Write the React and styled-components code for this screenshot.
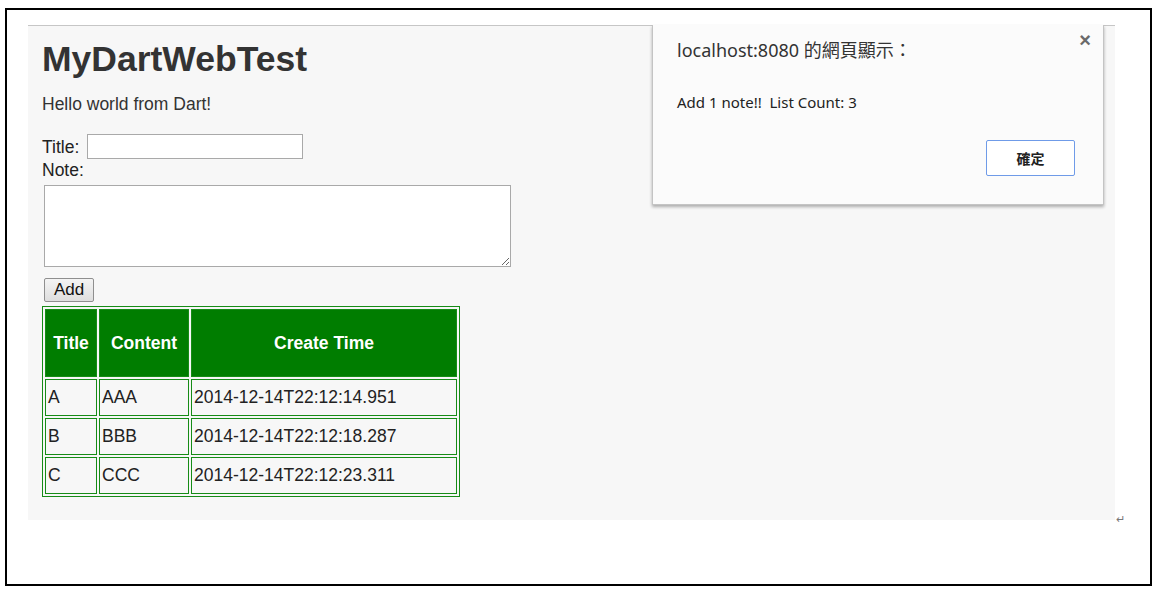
import React from "react";
import styled, { createGlobalStyle } from "styled-components";

const GlobalStyle = createGlobalStyle`
  html, body {
    margin: 0;
    padding: 0;
    background: #ffffff;
  }
  body {
    font-family: "Liberation Sans", Arial, sans-serif;
  }
`;

const notes = [
  { title: "A", content: "AAA", time: "2014-12-14T22:12:14.951" },
  { title: "B", content: "BBB", time: "2014-12-14T22:12:18.287" },
  { title: "C", content: "CCC", time: "2014-12-14T22:12:23.311" },
];

const App = () => {
  return (
    <>
      <GlobalStyle />
      <StFrame>
        <StShot>
          <StPage>
            <StHeading>MyDartWebTest</StHeading>
            <StHello>Hello world from Dart!</StHello>
            <StFieldRow>
              <StLabel>Title:</StLabel>
              <StInput type="text" />
            </StFieldRow>
            <StLabel>Note:</StLabel>
            <StTextArea />
            <StAddButton>Add</StAddButton>
            <StTable>
              <thead>
                <tr>
                  <StHeadCell $w={52}>Title</StHeadCell>
                  <StHeadCell $w={90}>Content</StHeadCell>
                  <StHeadCell $w={266}>Create Time</StHeadCell>
                </tr>
              </thead>
              <tbody>
                {notes.map((n) => (
                  <tr key={n.title}>
                    <StCell>{n.title}</StCell>
                    <StCell>{n.content}</StCell>
                    <StCell>{n.time}</StCell>
                  </tr>
                ))}
              </tbody>
            </StTable>
          </StPage>

          <StDialog>
            <StClose>×</StClose>
            <StDialogTitle>localhost:8080 的網頁顯示：</StDialogTitle>
            <StDialogText>Add 1 note!!&nbsp; List Count: 3</StDialogText>
            <StDialogFooter>
              <StOkButton>確定</StOkButton>
            </StDialogFooter>
          </StDialog>

          <StReturnMark>↵</StReturnMark>
        </StShot>
      </StFrame>
    </>
  );
};

const StFrame = styled.div`
  box-sizing: border-box;
  margin: 8px 0 0 5px;
  width: 1147px;
  height: 578px;
  border: 2px solid #000000;
  padding: 15px 0 0 21px;
`;

const StShot = styled.div`
  position: relative;
  box-sizing: border-box;
  width: 1087px;
  height: 495px;
  background: #f7f7f7;
  border-top: 1px solid #c6c6c6;
`;

const StPage = styled.div`
  padding: 13px 0 0 14px;
  color: #333333;
  font-size: 17.5px;
`;

const StHeading = styled.h1`
  margin: 0;
  font-size: 35.5px;
  font-weight: bold;
  line-height: 41px;
  color: #333333;
`;

const StHello = styled.p`
  margin: 14px 0 0;
  line-height: 20px;
  color: #333333;
`;

const StFieldRow = styled.div`
  display: flex;
  align-items: center;
  gap: 8px;
  margin-top: 20px;
  height: 25px;
`;

const StLabel = styled.div`
  color: #222222;
  line-height: 21px;
  margin-top: 1px;
`;

const StInput = styled.input`
  box-sizing: border-box;
  width: 216px;
  height: 25px;
  border: 1px solid #a9a9a9;
  background: #ffffff;
  margin: 0;
`;

const StTextArea = styled.textarea`
  display: block;
  box-sizing: border-box;
  width: 467px;
  height: 82px;
  margin: 4px 0 0 2px;
  border: 1px solid #a9a9a9;
  background: #ffffff;
  resize: both;
`;

const StAddButton = styled.button`
  display: block;
  box-sizing: border-box;
  width: 50px;
  height: 24px;
  margin: 11px 0 0 2px;
  padding: 0;
  font-family: "Liberation Sans", Arial, sans-serif;
  font-size: 17px;
  color: #111111;
  background: linear-gradient(#f4f4f4, #dedede);
  border: 1px solid #8f8f8f;
  border-radius: 2px;
`;

const StTable = styled.table`
  margin-top: 4px;
  border: 1px solid #168c16;
  border-spacing: 2px;
  font-size: 17.5px;
  color: #222222;
`;

const StHeadCell = styled.th`
  box-sizing: border-box;
  width: ${(p) => p.$w}px;
  height: 68px;
  padding: 0;
  background: #007d00;
  color: #ffffff;
  border: 1px solid #d8ecd8;
  outline: 1px solid #168c16;
  outline-offset: -1px;
  font-weight: bold;
  text-align: center;
`;

const StCell = styled.td`
  height: 37px;
  box-sizing: border-box;
  padding: 0 0 0 2px;
  border: 1px solid #168c16;
  text-align: left;
`;

const StDialog = styled.div`
  position: absolute;
  top: -1px;
  left: 624px;
  box-sizing: border-box;
  width: 452px;
  height: 180px;
  background: #fbfbfb;
  border: 1px solid #c4c4c4;
  border-top: none;
  box-shadow: 0 2px 3px rgba(0, 0, 0, 0.3);
  padding: 13px 24px 0 24px;
  font-family: "Noto Sans", "Noto Sans CJK TC", sans-serif;
  color: #333333;
`;

const StClose = styled.div`
  position: absolute;
  top: 4px;
  right: 12px;
  font-family: "Liberation Sans", Arial, sans-serif;
  font-size: 20px;
  font-weight: bold;
  color: #6a6a6a;
`;

const StDialogTitle = styled.div`
  font-size: 18px;
  line-height: 24px;
`;

const StDialogText = styled.div`
  margin-top: 30px;
  font-size: 15px;
  line-height: 20px;
  color: #222222;
`;

const StDialogFooter = styled.div`
  display: flex;
  justify-content: flex-end;
  margin-top: 28px;
  padding-right: 4px;
`;

const StOkButton = styled.button`
  box-sizing: border-box;
  width: 89px;
  height: 36px;
  background: #ffffff;
  border: 1px solid #6f9be8;
  border-radius: 2px;
  font-family: "Noto Sans CJK TC", sans-serif;
  font-size: 14px;
  font-weight: bold;
  color: #222222;
`;

const StReturnMark = styled.span`
  position: absolute;
  left: 1088px;
  bottom: -5px;
  font-size: 11px;
  line-height: 11px;
  color: #777777;
`;

export default App;
